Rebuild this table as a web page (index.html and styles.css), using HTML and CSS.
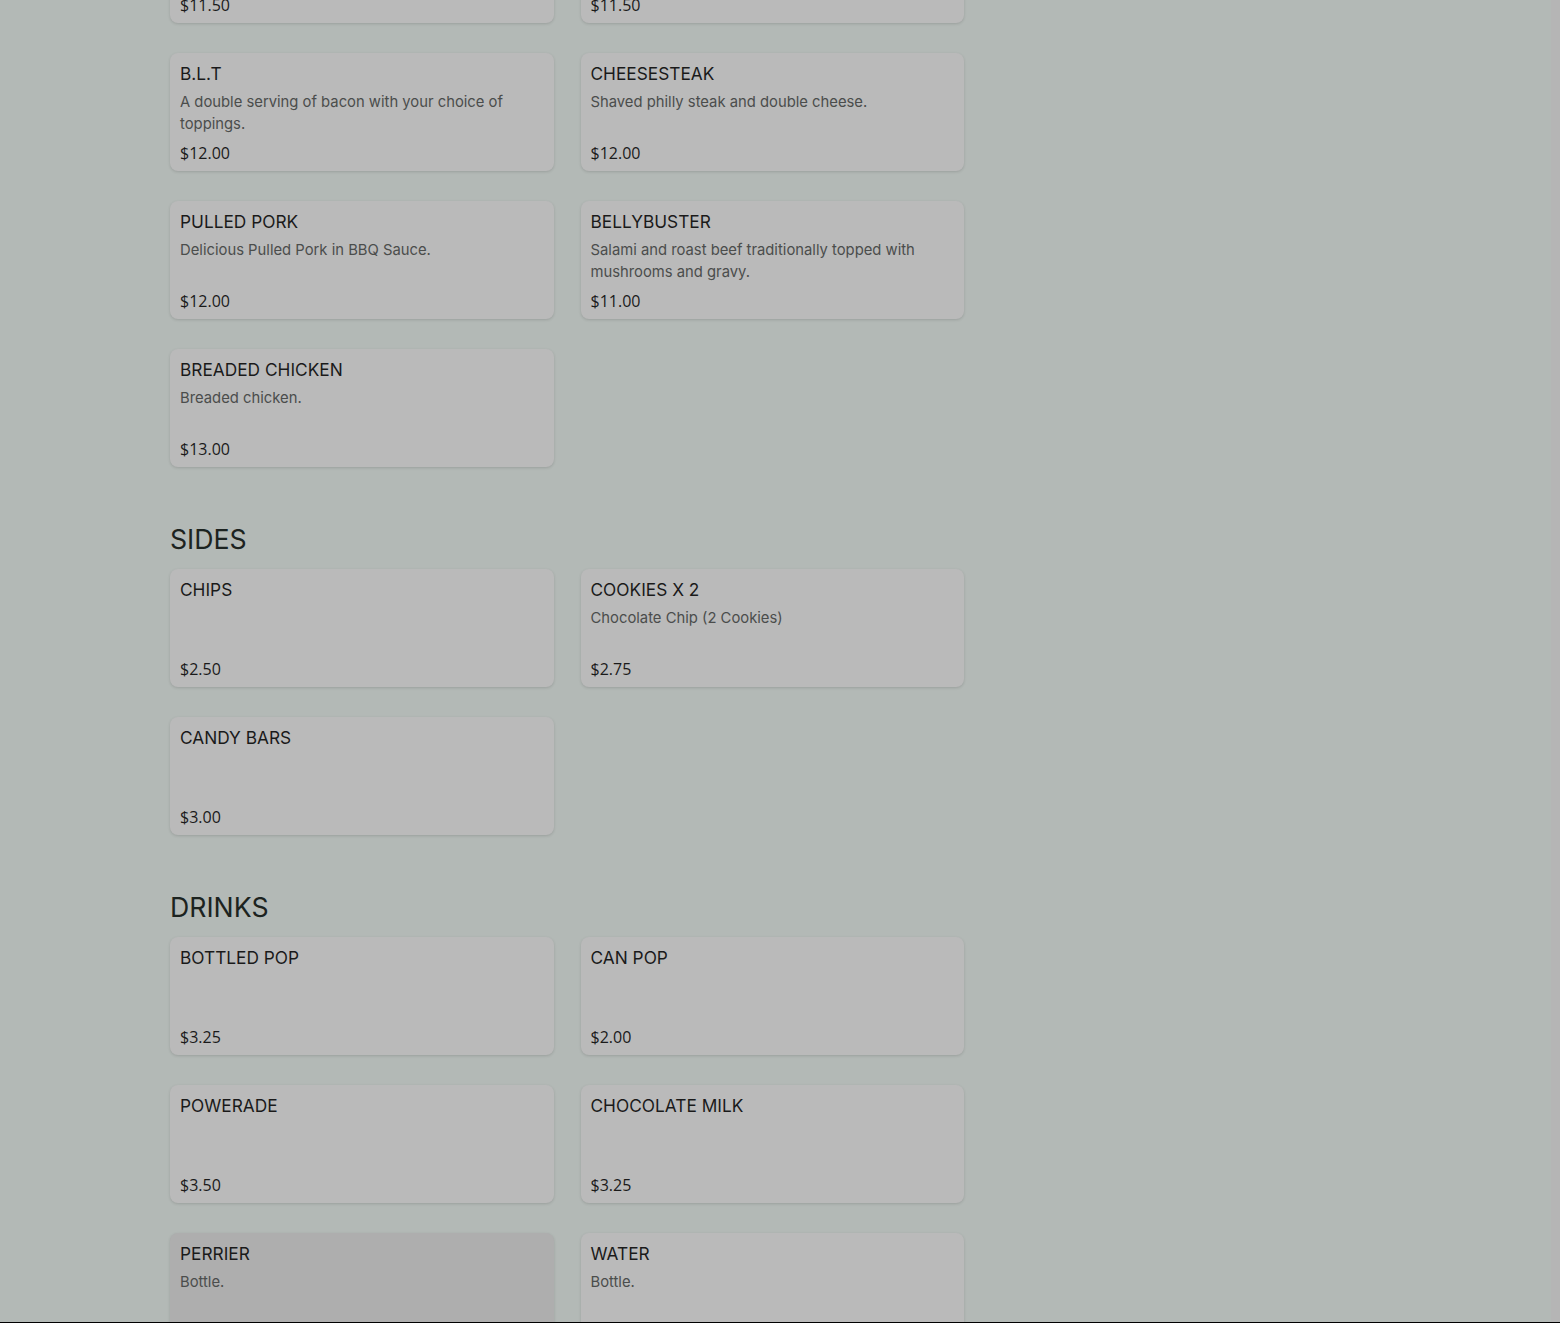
FILE: index.html
```html
<!DOCTYPE html>
<html lang="en">
<head>
    <meta charset="UTF-8">
    <meta name="viewport" content="width=device-width, initial-scale=1.0">
    <title>Menu</title>
    <link rel="stylesheet" href="styles.css">
</head>
<body>
    <div class="menu">
        <!-- Sandwiches (scrolled part way) -->
        <section class="menu-section first">
            <div class="item-grid">
                <div class="item-card">
                    <div class="item-name">HAM &amp; CHEESE</div>
                    <div class="item-desc">Ham with your choice of cheese.</div>
                    <div class="item-price">$11.50</div>
                </div>
                <div class="item-card">
                    <div class="item-name">TURKEY</div>
                    <div class="item-desc">Sliced turkey with your choice of toppings.</div>
                    <div class="item-price">$11.50</div>
                </div>
                <div class="item-card">
                    <div class="item-name">B.L.T</div>
                    <div class="item-desc">A double serving of bacon with your choice of toppings.</div>
                    <div class="item-price">$12.00</div>
                </div>
                <div class="item-card">
                    <div class="item-name">CHEESESTEAK</div>
                    <div class="item-desc">Shaved philly steak and double cheese.</div>
                    <div class="item-price">$12.00</div>
                </div>
                <div class="item-card">
                    <div class="item-name">PULLED PORK</div>
                    <div class="item-desc">Delicious Pulled Pork in BBQ Sauce.</div>
                    <div class="item-price">$12.00</div>
                </div>
                <div class="item-card">
                    <div class="item-name">BELLYBUSTER</div>
                    <div class="item-desc">Salami and roast beef traditionally topped with mushrooms and gravy.</div>
                    <div class="item-price">$11.00</div>
                </div>
                <div class="item-card">
                    <div class="item-name">BREADED CHICKEN</div>
                    <div class="item-desc">Breaded chicken.</div>
                    <div class="item-price">$13.00</div>
                </div>
            </div>
        </section>

        <section class="menu-section">
            <h2 class="section-title">SIDES</h2>
            <div class="item-grid">
                <div class="item-card">
                    <div class="item-name">CHIPS</div>
                    <div class="item-desc"></div>
                    <div class="item-price">$2.50</div>
                </div>
                <div class="item-card">
                    <div class="item-name">COOKIES X 2</div>
                    <div class="item-desc">Chocolate Chip (2 Cookies)</div>
                    <div class="item-price">$2.75</div>
                </div>
                <div class="item-card">
                    <div class="item-name">CANDY BARS</div>
                    <div class="item-desc"></div>
                    <div class="item-price">$3.00</div>
                </div>
            </div>
        </section>

        <section class="menu-section">
            <h2 class="section-title">DRINKS</h2>
            <div class="item-grid">
                <div class="item-card">
                    <div class="item-name">BOTTLED POP</div>
                    <div class="item-desc"></div>
                    <div class="item-price">$3.25</div>
                </div>
                <div class="item-card">
                    <div class="item-name">CAN POP</div>
                    <div class="item-desc"></div>
                    <div class="item-price">$2.00</div>
                </div>
                <div class="item-card">
                    <div class="item-name">POWERADE</div>
                    <div class="item-desc"></div>
                    <div class="item-price">$3.50</div>
                </div>
                <div class="item-card">
                    <div class="item-name">CHOCOLATE MILK</div>
                    <div class="item-desc"></div>
                    <div class="item-price">$3.25</div>
                </div>
                <div class="item-card hovered">
                    <div class="item-name">PERRIER</div>
                    <div class="item-desc">Bottle.</div>
                    <div class="item-price">$3.00</div>
                </div>
                <div class="item-card">
                    <div class="item-name">WATER</div>
                    <div class="item-desc">Bottle.</div>
                    <div class="item-price">$2.00</div>
                </div>
            </div>
        </section>
    </div>

    <div class="scroll-track"></div>
    <div class="bottom-edge"></div>
</body>
</html>
```

FILE: styles.css
```css
body {
    font-family: Inter, 'Noto Sans', sans-serif;
    background-color: #b3b9b6; /* page under the dim backdrop */
    margin: 0;
    color: #1b1d1c;
    overflow: hidden;
    height: 1323px;
}
.menu {
    width: 794px;
    padding-left: 170px;
}
.menu-section {
    margin-top: 55px;
}
.menu-section.first {
    margin-top: -95px; /* page is scrolled down */
}
.section-title {
    margin: 0 0 13px;
    font-size: 26.7px;
    line-height: 34px;
    font-weight: 400;
    color: #1c2320;
}
.item-grid {
    display: grid;
    grid-template-columns: repeat(2, 1fr);
    column-gap: 27px;
    row-gap: 30px;
}
.item-card {
    display: flex;
    flex-direction: column;
    background-color: #bababa;
    border-radius: 8px;
    padding: 10px 10px 7px;
    box-shadow: 0 1px 3px rgba(0, 0, 0, 0.14);
}
.item-card.hovered {
    background-color: #aeaeae;
}
.item-name {
    font-size: 17.3px;
    line-height: 22px;
    color: #1a1a1a;
}
.item-desc {
    margin-top: 6px;
    min-height: 44px;
    font-size: 14.8px;
    line-height: 22px;
    color: #4b4d4c;
}
.item-price {
    margin-top: 7px;
    font-family: 'Open Sans', 'Noto Sans', sans-serif;
    font-size: 16px;
    line-height: 22px;
    color: #1a1a1a;
}
.scroll-track {
    position: fixed;
    top: 0;
    right: 0;
    width: 9px;
    height: 100%;
    background-color: #b5b5b5;
}
.bottom-edge {
    position: fixed;
    left: 0;
    bottom: 0;
    width: 100%;
    height: 1px;
    background-color: #000;
}
```
